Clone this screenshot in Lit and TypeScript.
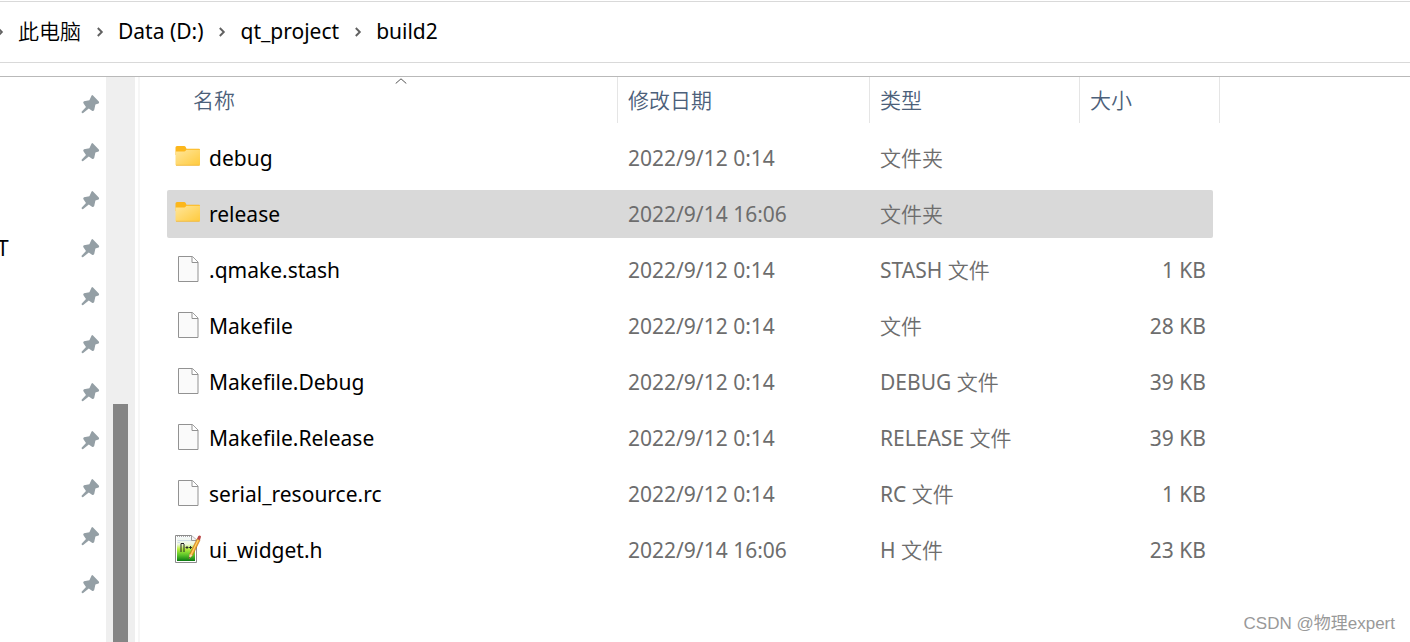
import { LitElement, html, css, svg, nothing } from "lit";
import { customElement, state } from "lit/decorators.js";
import { classMap } from "lit/directives/class-map.js";

type Kind = "folder" | "file" | "header";

interface Entry {
  name: string;
  kind: Kind;
  date: string;
  type: string;
  size: string;
}

const ENTRIES: Entry[] = [
  { name: "debug", kind: "folder", date: "2022/9/12 0:14", type: "文件夹", size: "" },
  { name: "release", kind: "folder", date: "2022/9/14 16:06", type: "文件夹", size: "" },
  { name: ".qmake.stash", kind: "file", date: "2022/9/12 0:14", type: "STASH 文件", size: "1 KB" },
  { name: "Makefile", kind: "file", date: "2022/9/12 0:14", type: "文件", size: "28 KB" },
  { name: "Makefile.Debug", kind: "file", date: "2022/9/12 0:14", type: "DEBUG 文件", size: "39 KB" },
  { name: "Makefile.Release", kind: "file", date: "2022/9/12 0:14", type: "RELEASE 文件", size: "39 KB" },
  { name: "serial_resource.rc", kind: "file", date: "2022/9/12 0:14", type: "RC 文件", size: "1 KB" },
  { name: "ui_widget.h", kind: "header", date: "2022/9/14 16:06", type: "H 文件", size: "23 KB" },
];

const CRUMBS = ["此电脑", "Data (D:)", "qt_project", "build2"];
const PINNED = ["", "", "", "T", "", "", "", "", "", "", ""];

@customElement("file-icon")
export class FileIcon extends LitElement {
  static properties = { kind: { type: String } };
  declare kind: Kind;

  static styles = css`
    :host { display: block; width: 26px; height: 30px; }
    svg { display: block; }
  `;

  private folder() {
    return svg`
      <defs>
        <linearGradient id="f" x1="0" y1="0" x2="1" y2="1">
          <stop offset="0" stop-color="#ffe69b"/><stop offset="1" stop-color="#ffca3c"/>
        </linearGradient>
      </defs>
      <path d="M0.5 4.5 Q0.5 3 2 3 H9 Q10.3 3 10.8 4.2 L11.5 5.8 H24 Q25 5.8 25 6.8 V12 H0.5 Z" fill="#fcb71c"/>
      <path d="M0.5 8.6 H9.3 Q10 8.6 10.6 7.8 L11.3 6.8 H25 V21.5 Q25 22.6 24 22.6 H1.5 Q0.5 22.6 0.5 21.5 Z" fill="url(#f)"/>
      <path d="M1 22.3 H24.6" stroke="#efb83e" stroke-width="0.8"/>`;
  }

  private page() {
    return svg`
      <path d="M3.5 1.5 H17.5 L23 7 V26.5 H3.5 Z" fill="#fafafa" stroke="#929292"/>
      <path d="M17 1.5 V7.5 H23" fill="#ffffff" stroke="#929292"/>`;
  }

  private header() {
    return svg`
      <defs>
        <linearGradient id="g" x1="0" y1="0" x2="0" y2="1">
          <stop offset="0" stop-color="#f4f8fa"/><stop offset="0.3" stop-color="#eef7e0"/>
          <stop offset="0.5" stop-color="#b9ee3c"/><stop offset="0.75" stop-color="#5cc52a"/>
          <stop offset="1" stop-color="#0b7a12"/>
        </linearGradient>
      </defs>
      <path d="M0.5 0.5 H16.5 L21.5 5 V27.5 H0.5 Z" fill="#ffffff" stroke="#8c8c8c"/>
      <path d="M2 2 H16 V6 H20 V26 H2 Z" fill="url(#g)"/>
      <path d="M2 1.5 H16" stroke="#a9a9a9" stroke-dasharray="1 1"/>
      <path d="M2.5 5.5 H18 M2.5 7.5 H5" stroke="#cfdde6"/>
      <path d="M16.5 0.5 V5.5 H21.5" fill="#f5f5f5" stroke="#9a9a9a"/>
      <path d="M6 8.5 H9 M6 8.5 V17 M9 9 V17" fill="none" stroke="#222"/>
      <path d="M10.5 12.5 H13.5 M12 11 V14 M14 12.5 H17 M15.5 11 V14" stroke="#222" stroke-width="0.9"/>
      <path d="M22 3.8 L25 5.2 L17.5 20.5 L14 23.8 L14.6 19.3 Z" fill="#f3a72b" stroke="#a4631a" stroke-width="0.5"/>
      <path d="M23.2 4.8 L16 20" stroke="#ffdc7a" stroke-width="0.9"/>
      <path d="M14 23.8 L14.6 19.3 L17.5 20.5 Z" fill="#f7dcae"/>
      <path d="M14 23.8 L14.3 21.9 L15.4 22.5 Z" fill="#333"/>
      <path d="M22 3.8 L23.3 1 Q25 -0.2 26 1.6 L25 5.2 Z" fill="#b94545"/>`;
  }

  render() {
    const art = this.kind === "folder" ? this.folder() : this.kind === "file" ? this.page() : this.header();
    return html`<svg width="26" height="30" viewBox="0 0 26 30" aria-hidden="true">${art}</svg>`;
  }
}

@customElement("app-root")
export class AppRoot extends LitElement {
  @state() private selected = "release";

  static styles = css`
    :host {
      display: flex;
      flex-direction: column;
      height: 100vh;
      overflow: hidden;
      position: relative;
      background: #fff;
      color: #000;
      font-family: "Noto Sans", "Noto Sans CJK SC", sans-serif;
      font-size: 21px;
      line-height: 30px;
    }
    * { box-sizing: border-box; }
    button {
      border: 0;
      padding: 0;
      background: none;
      color: inherit;
      font: inherit;
      text-align: left;
    }
    a { color: inherit; text-decoration: none; }
    ul, ol { list-style: none; margin: 0; padding: 0; }
    .zh { font-family: "Noto Sans CJK SC", sans-serif; font-weight: 350; line-height: 28px; }

    .address {
      margin-top: 1px;
      border-top: 1px solid #d9d9d9;
      border-bottom: 1px solid #d9d9d9;
      height: 62px;
      flex: none;
    }
    .crumbs { display: flex; align-items: center; height: 58px; margin-left: -19px; }
    .crumb { display: flex; align-items: center; white-space: nowrap; }
    .sep { width: 37px; display: flex; justify-content: center; padding-top: 2px; }

    .body {
      display: flex;
      flex: 1;
      min-height: 0;
      margin-top: 13px;
      border-top: 1px solid #b9b9b9;
    }
    .nav { width: 106px; flex: none; padding-top: 3px; }
    .pin { display: flex; align-items: center; justify-content: space-between; height: 48px; padding-right: 6px; }
    .pin svg { flex: none; }
    .label { margin-left: -3px; }
    .track {
      width: 29px;
      flex: none;
      background: #efefef;
      display: flex;
      flex-direction: column;
      align-items: center;
    }
    .track::before { content: ""; flex: 327 0 0; }
    .thumb { flex: 238 0 0; width: 15px; background: #858585; }
    .main { flex: 1; min-width: 0; margin-left: 3px; border-left: 2px solid #f6f6f6; padding: 0 190px 0 27px; }

    table { width: 100%; border-collapse: collapse; table-layout: fixed; }
    .c-date { width: 252px; }
    .c-type { width: 210px; }
    .c-size { width: 140px; }
    th { padding: 0 0 7px; font-weight: 400; text-align: left; color: #4c607a; position: relative; }
    .sort { display: block; width: 100%; height: 46px; padding: 0 10px; border-right: 1px solid #e5e5e5; }
    .first { padding-left: 26px; }
    .caret { position: absolute; top: 1px; left: 50%; margin-left: 2px; }
    td { padding: 4px 0; }
    .cell { height: 48px; display: flex; align-items: center; padding: 0 10px; color: #6d6d6d; white-space: pre; }
    .name { padding: 0 8px; gap: 8px; color: #000; border-radius: 2px 0 0 2px; }
    .size { justify-content: flex-end; margin-right: 7px; padding: 0 7px; border-radius: 0 2px 2px 0; }
    .on .cell { background: #d9d9d9; }

    .mark {
      position: absolute;
      right: 15px;
      bottom: 6px;
      font-family: "Liberation Sans", "Noto Sans CJK SC", sans-serif;
      font-size: 17px;
      line-height: 24px;
      color: #999;
    }
  `;

  private chevron() {
    return html`<span class="sep"><svg width="8" height="10" viewBox="0 0 8 10" aria-hidden="true">
      <path d="M1.8 1 L5.8 5 L1.8 9" fill="none" stroke="#606060" stroke-width="1.9"/></svg></span>`;
  }

  private mixed(text: string) {
    return text
      .split(/([\u4e00-\u9fff]+)/)
      .filter(Boolean)
      .map((t) => (/[\u4e00-\u9fff]/.test(t) ? html`<span class="zh">${t}</span>` : t));
  }

  render() {
    return html`
      <nav class="address" aria-label="路径">
        <ol class="crumbs">
          ${CRUMBS.map((c) => html`<li class="crumb">${this.chevron()}<a href="#">${this.mixed(c)}</a></li>`)}
        </ol>
      </nav>
      <div class="body">
        <ul class="nav">
          ${PINNED.map(
            (p) => html`<li class="pin"><span class="label">${p}</span>
              <svg width="20" height="20" viewBox="0 0 20 20" aria-hidden="true">
                <path d="M11.6 1.4 Q12.3 0.8 13 1.4 L18.8 7.4 Q19.6 8.6 18.6 9.4 L15.4 10.6 L14.2 16 Q13.4 17.6 12 16.8 L8.8 14.6 L3.2 19 Q1.4 19.6 1.6 17.8 L6 13 L3.6 9.6 Q2.6 8.2 4 7.2 L9.4 6.2 Z" fill="#949fa5"/>
              </svg></li>`
          )}
        </ul>
        <div class="track"><div class="thumb"></div></div>
        <main class="main">
          <table>
            <colgroup><col /><col class="c-date" /><col class="c-type" /><col class="c-size" /></colgroup>
            <thead>
              <tr>
                ${["名称", "修改日期", "类型", "大小"].map(
                  (h, i) => html`<th scope="col">
                    <button class=${classMap({ sort: true, first: i === 0 })}><span class="zh">${h}</span></button>
                    ${i === 0
                      ? html`<svg class="caret" width="12" height="6" viewBox="0 0 12 6" aria-hidden="true">
                          <path d="M0.7 5.5 L6 0.8 L11.3 5.5" fill="none" stroke="#555" /></svg>`
                      : nothing}
                  </th>`
                )}
              </tr>
            </thead>
            <tbody>
              ${ENTRIES.map(
                (e) => html`<tr class=${classMap({ on: e.name === this.selected })} @click=${() => (this.selected = e.name)}>
                  <td><div class="cell name"><file-icon .kind=${e.kind}></file-icon><span>${e.name}</span></div></td>
                  <td><div class="cell">${e.date}</div></td>
                  <td><div class="cell"><span>${this.mixed(e.type)}</span></div></td>
                  <td><div class="cell size">${e.size}</div></td>
                </tr>`
              )}
            </tbody>
          </table>
        </main>
      </div>
      <div class="mark">CSDN @物理expert</div>
    `;
  }
}
